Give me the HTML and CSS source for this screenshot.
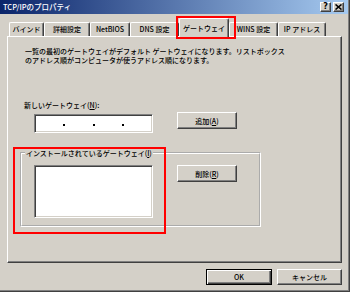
FILE: index.html
```html
<!DOCTYPE html>
<html lang="ja">
<head>
<meta charset="utf-8">
<title>TCP/IPのプロパティ</title>
<link rel="stylesheet" href="styles.css">
</head>
<body>
<div class="window">
  <div class="titlebar">
    <span class="title">TCP/IPのプロパティ</span>
    <span class="tb-btn">?</span>
    <span class="tb-btn"><svg width="7" height="6" viewBox="0 0 7 6"><path d="M0.5 0.5 L6.5 5.5 M6.5 0.5 L0.5 5.5" stroke="#000" stroke-width="1.6" fill="none"/></svg></span>
  </div>
  <div class="tabs">
    <div class="tab w35">バインド</div>
    <div class="tab w46">詳細設定</div>
    <div class="tab w40">NetBIOS</div>
    <div class="tab w49">DNS 設定</div>
    <div class="tab active w50">ゲートウェイ<span class="mark mark-tab"></span></div>
    <div class="tab w49">WINS 設定</div>
    <div class="tab w48">IP アドレス</div>
  </div>
  <div class="panel">
    <p class="desc">一覧の最初のゲートウェイがデフォルト ゲートウェイになります。リストボックス<br>のアドレス順がコンピュータが使うアドレス順になります。</p>
    <div class="label">新しいゲートウェイ(<u>N</u>):</div>
    <div class="row">
      <div class="sunken ipbox"><span class="dot"></span><span class="dot"></span><span class="dot"></span></div>
      <div class="btn side-btn">追加(<u>A</u>)</div>
    </div>
    <div class="group-wrap">
      <fieldset class="group">
        <legend>インストールされているゲートウェイ(<u>I</u>)</legend>
        <div class="row inner">
          <div class="sunken listbox"></div>
          <div class="btn side-btn">削除(<u>R</u>)</div>
        </div>
      </fieldset>
      <span class="mark mark-group"></span>
    </div>
  </div>
  <div class="footer">
    <div class="btn default ok">OK</div>
    <div class="btn cancel">キャンセル</div>
  </div>
</div>
</body>
</html>
```
FILE: styles.css
```css
* { box-sizing: border-box; }
html, body { margin: 0; padding: 0; }
body {
  width: 350px;
  height: 292px;
  background: #d4d0c8;
  font-family: "Noto Sans CJK JP", "Liberation Sans", sans-serif;
  font-size: 7px;
  font-weight: 500;
  line-height: 8px;
  color: #000;
  overflow: hidden;
}
.window {
  width: 350px;
  height: 292px;
  border-right: 1px solid #404040;
  border-bottom: 1px solid #404040;
  box-shadow: inset -1px -1px 0 #808080;
  display: flex;
  flex-direction: column;
}
.titlebar {
  height: 14px;
  margin-right: 1px;
  background: linear-gradient(to right, #0a246a, #a6caf0);
  display: flex;
  align-items: center;
  padding: 0 4px 0 3px;
  color: #fff;
}
.title { flex: 1; font-size: 7.5px; white-space: nowrap; }
.tb-btn {
  width: 11px;
  height: 10px;
  background: #d4d0c8;
  border: 1px solid;
  border-color: #fff #404040 #404040 #fff;
  box-shadow: inset -1px -1px 0 #808080;
  color: #000;
  font: bold 8px/8px "DejaVu Sans", sans-serif;
  display: flex;
  align-items: center;
  justify-content: center;
}
.tb-btn + .tb-btn { margin-left: 2px; }
.tabs {
  height: 22px;
  display: flex;
  align-items: flex-end;
  padding-left: 9px;
}
.tab {
  height: 14px;
  border-top: 1px solid #fff;
  border-left: 1px solid #fff;
  border-right: 1px solid #404040;
  box-shadow: inset -1px 0 0 #808080;
  border-radius: 2px 2px 0 0;
  display: flex;
  align-items: center;
  justify-content: center;
  padding-bottom: 2px;
  white-space: nowrap;
}
.w35 { width: 35px; }
.w40 { width: 40px; }
.w46 { width: 46px; }
.w48 { width: 48px; }
.w49 { width: 49px; }
.w50 { width: 50px; }
.tab.active {
  height: 19px;
  margin-bottom: -1px;
  position: relative;
  z-index: 1;
  background: #d4d0c8;
  padding-bottom: 1px;
}
.mark {
  position: absolute;
  border: 2px solid #f00;
  pointer-events: none;
}
.mark-tab { left: -4px; top: -3px; width: 60px; height: 23px; }
.panel {
  margin-left: 7px;
  width: 335px;
  height: 227px;
  border-top: 1px solid #fff;
  border-left: 1px solid #fff;
  border-right: 1px solid #404040;
  border-bottom: 1px solid #404040;
  box-shadow: inset -1px -1px 0 #808080;
}
.desc {
  margin: 10px 0 0 17px;
  line-height: 8.5px;
  white-space: nowrap;
}
.label { margin: 37px 0 0 16px; white-space: nowrap; }
.row { display: flex; align-items: flex-start; margin: 3px 0 0 26px; }
.sunken {
  background: #fff;
  border: 1px solid;
  border-color: #808080 #fff #fff #808080;
  box-shadow: inset 1px 1px 0 #404040, inset -1px -1px 0 #d4d0c8;
}
.ipbox {
  margin-top: 2px;
  width: 119px;
  height: 19px;
  display: flex;
  justify-content: space-evenly;
  align-items: flex-end;
  padding-bottom: 6px;
}
.dot { width: 2px; height: 2px; background: #000; }
.btn {
  background: #d4d0c8;
  border: 1px solid;
  border-color: #fff #404040 #404040 #fff;
  box-shadow: inset -1px -1px 0 #808080;
  display: flex;
  align-items: center;
  justify-content: center;
  white-space: nowrap;
}
.side-btn { margin-left: 24px; width: 60px; height: 17px; }
.group-wrap { position: relative; margin: 16px 0 0 12px; width: 241px; }
.group {
  margin: 0;
  width: 241px;
  padding: 8px 0 7px 0;
  border: 2px groove #fff;
  min-width: 0;
}
.group legend {
  margin-left: 3px;
  padding: 0 1px;
  line-height: 8px;
  white-space: nowrap;
}
.row.inner { margin: 0 0 0 12px; }
.listbox { width: 119px; height: 53px; }
.mark-group { left: -7px; top: -2px; width: 153px; height: 87px; }
.footer {
  width: 342px;
  display: flex;
  justify-content: flex-end;
  gap: 5px;
  margin-top: 6px;
}
.ok, .cancel { height: 16px; }
.ok { width: 66px; }
.cancel { width: 65px; }
.btn.default {
  border: 1px solid #000;
  box-shadow: inset 1px 1px 0 #fff, inset -1px -1px 0 #404040, inset -2px -2px 0 #808080;
}
```
